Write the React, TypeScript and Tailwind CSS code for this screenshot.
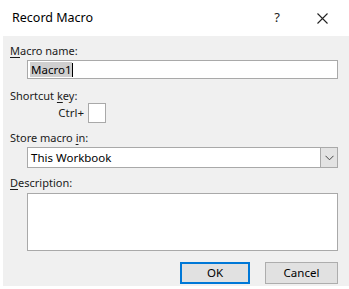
import React from 'react';

const font = { fontFamily: '"Noto Sans", "Open Sans", sans-serif' };

// label with one underlined access key
const Label: React.FC<{ pre: string; key_: string; post: string; className?: string }> = ({ pre, key_, post, className }) => (
  <div className={`h-4 leading-4 text-[11px] text-[#1a1a1a] ${className ?? ''}`}>
    {pre}
    <span className="underline underline-offset-2">{key_}</span>
    {post}
  </div>
);

export default function App() {
  return (
    <div className="w-[349px] h-[289px] bg-white flex flex-col overflow-hidden" style={font}>
      {/* Title bar */}
      <div className="h-9 flex items-center pl-3 pr-[21px] shrink-0">
        <span className="text-[12.5px] text-black">Record Macro</span>
        <span className="ml-auto text-[13px] text-[#222]">?</span>
        <svg className="ml-[37px]" width="11" height="11" viewBox="0 0 11 11">
          <path d="M0.5 0.5 L10.5 10.5 M10.5 0.5 L0.5 10.5" stroke="#222" strokeWidth="1.1" fill="none" />
        </svg>
      </div>

      {/* Body */}
      <div className="ml-[3px] h-[250px] bg-[#f0f0f0] pt-[7px] pl-[7px] pr-[11px] flex flex-col">
        <Label pre="" key_="M" post="acro name:" />
        <div className="mt-px ml-[17px] h-[19px] border border-[#a9a9a9] bg-white flex items-center pl-[2px]">
          <span className="bg-[#cfcfcf] text-[11.5px] leading-[15px] px-px text-black">Macro1</span>
          <span className="w-px h-[14px] bg-black" />
        </div>

        <Label pre="Shortcut " key_="k" post="ey:" className="mt-[9px]" />
        <div className="-mt-px flex items-center h-5">
          <span className="ml-[42px] w-[32px] text-right text-[11.5px] text-[#1a1a1a]">Ctrl+</span>
          <div className="ml-[4px] w-[18px] h-5 border border-[#a9a9a9] bg-white" />
        </div>

        <Label pre="Store macro " key_="i" post="n:" className="mt-[7px]" />
        <div className="mt-px ml-[17px] h-[21px] border border-[#a9a9a9] bg-white flex items-center">
          <span className="pl-[3px] text-[11.5px] text-black flex-1">This Workbook</span>
          <div className="w-[17px] h-full bg-[#e3e3e3] border-l border-[#a9a9a9] flex items-center justify-center">
            <svg width="9" height="6" viewBox="0 0 9 6">
              <path d="M0.5 0.8 L4.5 4.8 L8.5 0.8" stroke="#444" strokeWidth="1" fill="none" />
            </svg>
          </div>
        </div>

        <Label pre="" key_="D" post="escription:" className="mt-[7px]" />
        <div className="mt-[2px] ml-[17px] h-[58px] border border-[#a9a9a9] bg-white" />

        <div className="mt-[11px] flex justify-end gap-[15px]">
          <button className="w-[70px] h-[22px] border-2 border-[#0078d7] bg-[#e1e1e1] text-[11.5px] text-black">OK</button>
          <button className="w-[73px] h-[22px] border border-[#adadad] bg-[#e1e1e1] text-[11.5px] text-black">Cancel</button>
        </div>
      </div>
    </div>
  );
}
